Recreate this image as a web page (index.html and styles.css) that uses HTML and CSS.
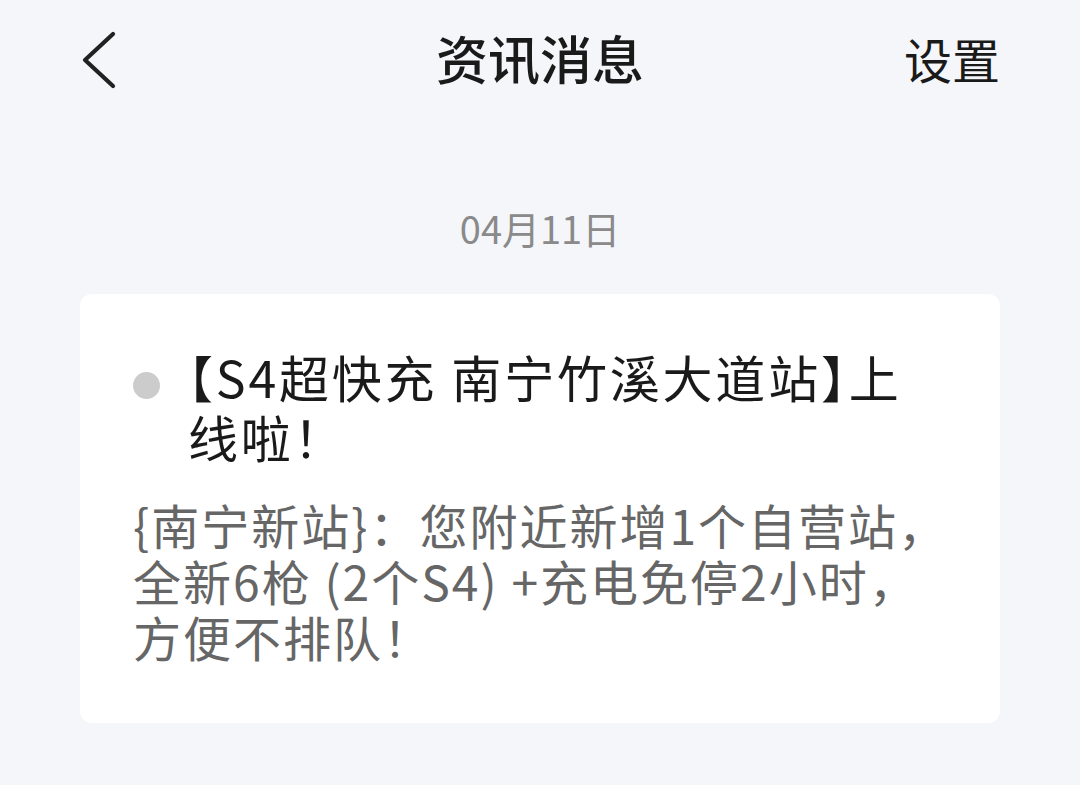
FILE: index.html
```html
<!DOCTYPE html>
<html lang="zh-CN">
<head>
<meta charset="utf-8">
<link rel="stylesheet" href="styles.css">
</head>
<body>
<div class="page">
  <header class="header">
    <div class="back">
      <svg width="40" height="60" viewBox="0 0 40 60"><polyline points="33,3 5,29 33,55" fill="none" stroke="#222" stroke-width="4.2" stroke-linecap="round" stroke-linejoin="round"/></svg>
    </div>
    <div class="title">资讯消息</div>
    <div class="settings">设置</div>
  </header>
  <div class="date">04月11日</div>
  <div class="card">
    <div class="card-title">
      <span class="dot"></span>
      <div class="title-text">【S4超快充 南宁竹溪大道站】上线啦！</div>
    </div>
    <div class="card-body">{南宁新站}：您附近新增1个自营站，全新6枪 (2个S4) +充电免停2小时，方便不排队！</div>
  </div>
</div>
</body>
</html>
```

FILE: styles.css
```css
html, body {
  margin: 0;
  padding: 0;
  background: #f5f6fa;
}
.page {
  width: 1080px;
  height: 785px;
  font-family: "Noto Sans CJK SC", "Noto Sans", sans-serif;
  color: #1a1a1a;
}
.header {
  height: 124px;
  display: flex;
  align-items: center;
  justify-content: space-between;
  padding: 0 80px 8px 80px;
  box-sizing: border-box;
  position: relative;
}
.back {
  width: 40px;
  height: 60px;
  display: flex;
  margin-top: 6px;
}
.title {
  font-size: 52px;
  font-weight: 500;
  line-height: 60px;
  position: absolute;
  left: 0;
  right: 0;
  top: 28px;
  text-align: center;
  pointer-events: none;
}
.settings {
  font-size: 48px;
  line-height: 60px;
  color: #1a1a1a;
}
.date {
  margin-top: 79px;
  text-align: center;
  font-size: 38px;
  line-height: 50px;
  color: #8a8a8a;
}
.card {
  margin: 41px 80px 0;
  background: #fff;
  border-radius: 12px;
  padding: 52px 45px 59px 53px;
}
.card-title {
  display: flex;
  align-items: flex-start;
  padding-right: 20px;
}
.dot {
  flex: none;
  width: 27px;
  height: 27px;
  border-radius: 50%;
  background: #cccccc;
  margin-top: 26px;
  margin-right: 28px;
}
.title-text {
  font-size: 50px;
  line-height: 60px;
  letter-spacing: 2.8px;
  color: #1a1a1a;
  font-feature-settings: "halt";
}
.card-body {
  margin-top: 30px;
  font-size: 48px;
  line-height: 56px;
  letter-spacing: 2px;
  color: #666666;
}
```
